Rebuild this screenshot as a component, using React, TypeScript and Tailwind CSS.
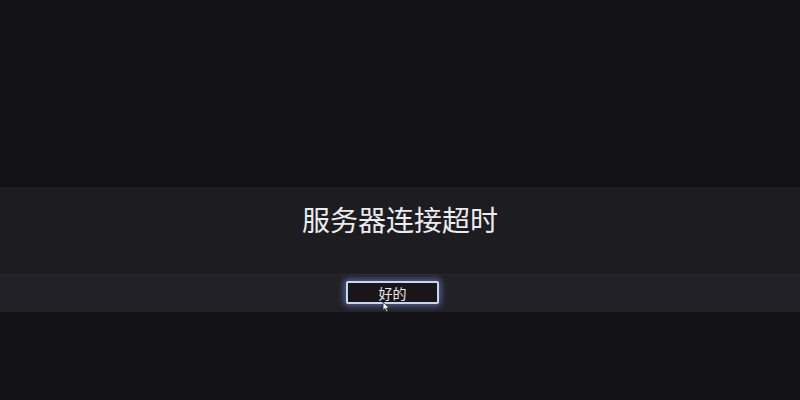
import React from "react";

export default function App() {
  return (
    <div
      className="w-[800px] h-[400px] bg-[#121115] flex flex-col overflow-hidden"
      style={{ fontFamily: '"Noto Sans CJK SC", "Noto Sans", sans-serif' }}
    >
      <div className="h-[187px] shrink-0" />
      <div className="h-[87px] shrink-0 bg-[#1d1c21] flex items-center justify-center">
        <span className="text-[28px] leading-none text-[#ececee] mt-[-24px]">服务器连接超时</span>
      </div>
      <div className="h-[38px] shrink-0 bg-[#222127] border-t border-[#28272d] flex items-center justify-center">
        <div className="relative mr-[15px]">
          <button className="w-[93px] h-[23px] bg-[#1a1519] border-2 border-[#c9d6f0] rounded-[2px] shadow-[0_0_6px_2px_rgba(120,150,230,0.55)] flex items-center justify-center text-[14px] leading-none text-[#e8e8ea] mt-[-2px]">
            好的
          </button>
          <svg className="absolute left-[36px] top-[18px]" width="9" height="12" viewBox="0 0 9 12">
            <path d="M1 1 L1 9.5 L3 7.6 L4.6 11 L6 10.3 L4.5 7 L7.3 7 Z" fill="#f2f2f2" stroke="#222" strokeWidth="0.8" />
          </svg>
        </div>
      </div>
      <div className="flex-1" />
    </div>
  );
}
